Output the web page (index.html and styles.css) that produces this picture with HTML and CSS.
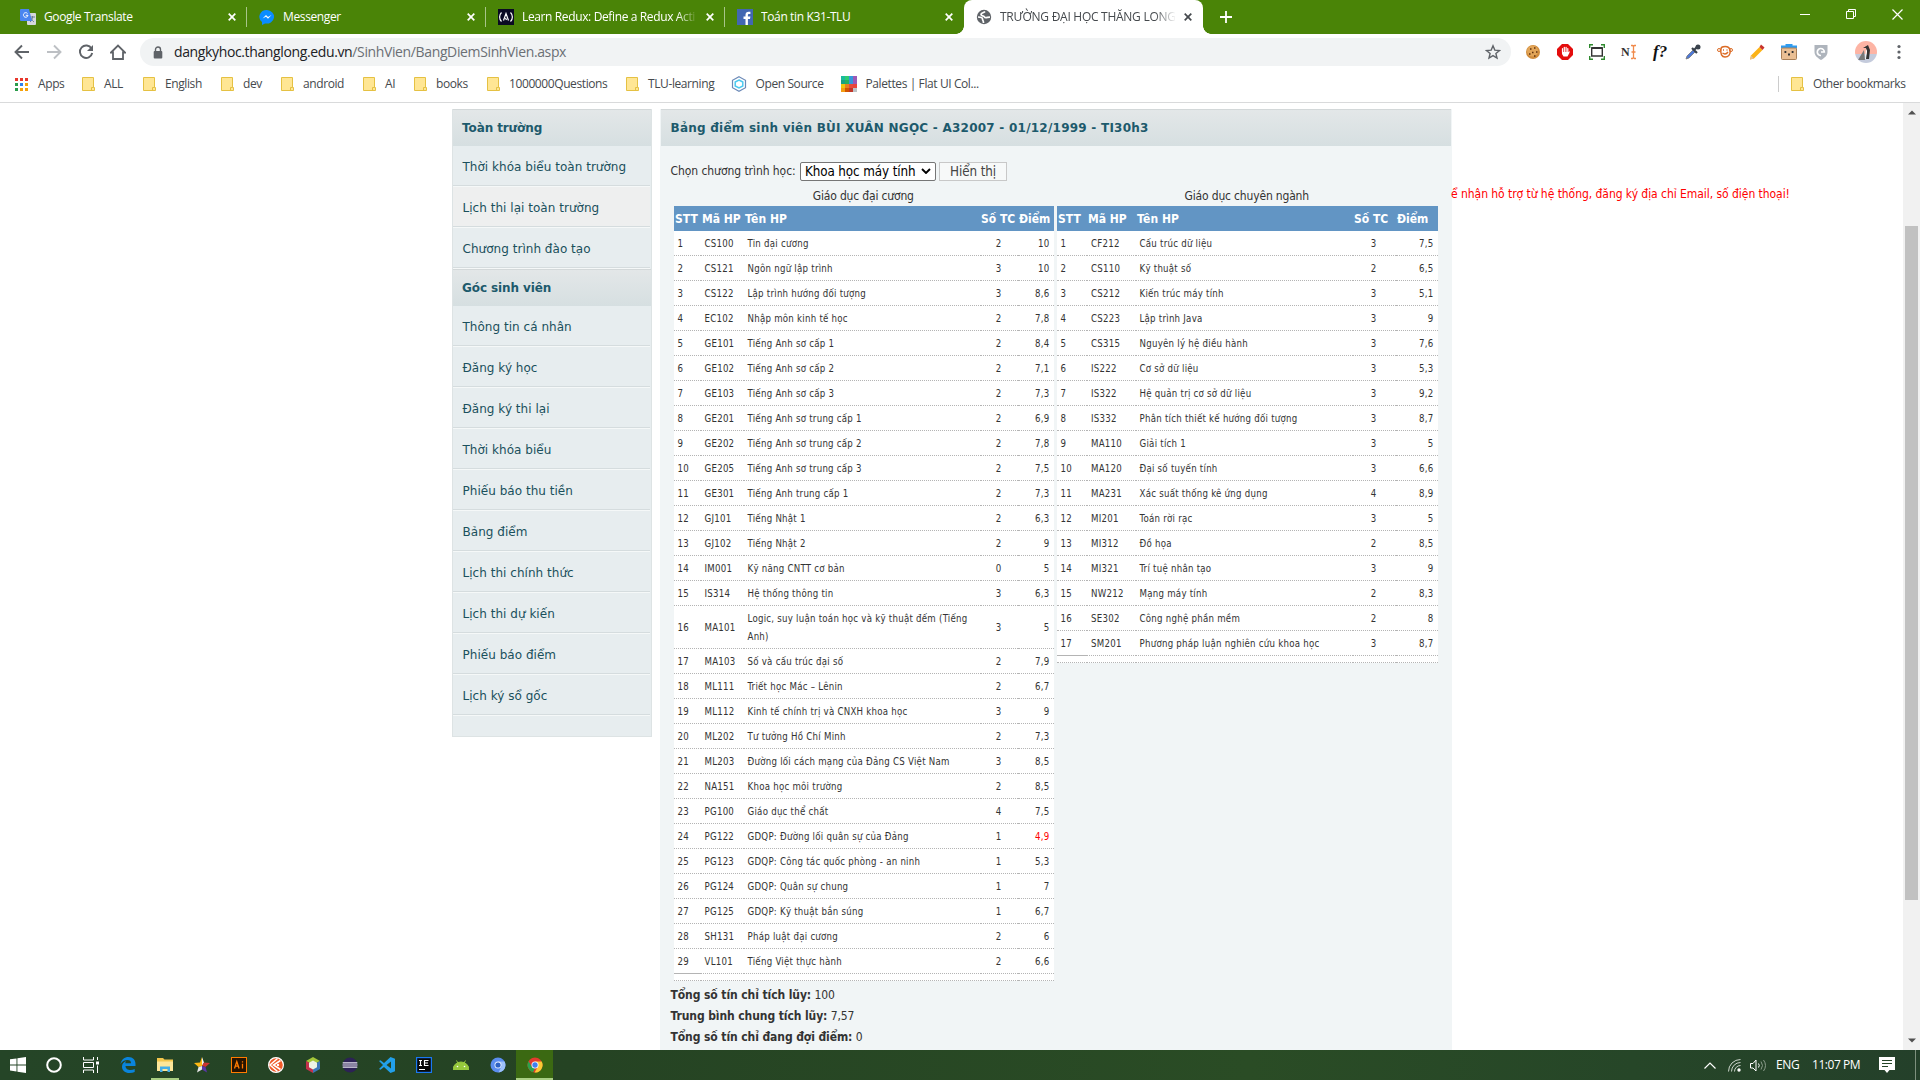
FILE: index.html
```html
<!DOCTYPE html>
<html lang="vi">
<head>
<meta charset="utf-8">
<title>TRƯỜNG ĐẠI HỌC THĂNG LONG</title>
<link rel="stylesheet" href="styles.css">
</head>
<body>
<svg class="defs" width="0" height="0">
  <symbol id="x" viewBox="0 0 8 8"><path d="M.7.7l6.6 6.6M7.3.7L.7 7.3" stroke="currentColor" stroke-width="1.7" fill="none"/></symbol>
  <symbol id="folder" viewBox="0 0 13 14"><path d="M.5.5h11v10h1v3H.5z" fill="#ffe694" stroke="#e5c143"/><path d="M9.5 13.5v-3h2" fill="none" stroke="#e5c143"/></symbol>
</svg>

<header class="tabs">
  <div class="tab"><svg class="fav" viewBox="0 0 16 16"><rect x="7" y="4" width="9" height="12" rx="1" fill="#d5d8dc"/><path d="M10 8h5M12.500 7v1c0 2-1 4-2.500 5m1-4c.5 2 2 3 3 4" stroke="#6b7f93" fill="none"/><path d="M1 0h8l3 12H1a1 1 0 0 1-1-1V1a1 1 0 0 1 1-1z" fill="#4a86f0"/><path d="M7.500 4.500A2.300 2.300 0 1 0 8 6.300H5.800" stroke="#fff" fill="none"/></svg><span class="tt">Google Translate</span><svg class="cl"><use href="#x"/></svg></div>
  <div class="tab"><svg class="fav" viewBox="0 0 16 16"><path d="M8 1a7.300 6.800 0 0 0-5 12v3l3-1.600A7.300 6.800 0 1 0 8 1z" fill="#0a8cff"/><path d="M3.500 9.500L7 6l2 2 3.500-2L9 9.700l-2-2z" fill="#fff"/></svg><span class="tt">Messenger</span><svg class="cl"><use href="#x"/></svg></div>
  <div class="tab"><svg class="fav" viewBox="0 0 16 16"><rect width="16" height="16" fill="#0a0a23"/><path d="M3.500 3.500c-2.500 2.500-2.500 6.500 0 9M12.500 3.500c2.500 2.500 2.500 6.500 0 9M5.500 11.500l2.500-7 2.500 7M7.500 9l1 2" stroke="#fff" stroke-width="1.200" fill="none"/></svg><span class="tt fade">Learn Redux: Define a Redux Acti</span><svg class="cl"><use href="#x"/></svg></div>
  <div class="tab"><svg class="fav" viewBox="0 0 16 16"><rect width="16" height="16" fill="#4267b2"/><path d="M8.500 16V10H6.500V7.500h2V6c0-2.200 1.200-3.300 3.200-3.300h1.700V5h-1.200c-1 0-1.300.5-1.300 1.300v1.200h2.500L13 10h-2.100v6z" fill="#fff"/></svg><span class="tt">Toán tin K31-TLU</span><svg class="cl"><use href="#x"/></svg></div>
  <div class="tab active"><svg class="fav" viewBox="0 0 16 16"><circle cx="8" cy="8" r="7.200" fill="#5f6368"/><path d="M9 2.500C8 4 5 3.800 5 5.500s3 1 3.500 2.500S12 8 14 8.200M2 8c3 0 4.500.5 4.500 2s1 1.500 1 4" stroke="#fff" stroke-width="1.700" fill="none"/></svg><span class="tt fade">TRƯỜNG ĐẠI HỌC THĂNG LONG</span><svg class="cl"><use href="#x"/></svg></div>
  <svg class="plus" viewBox="0 0 12 12"><path d="M6 0v12M0 6h12" stroke="#fff" stroke-width="1.800"/></svg>
  <div class="win">
    <svg width="10" height="10" viewBox="0 0 10 10"><path d="M0 5.500h10" stroke="#fff"/></svg>
    <svg width="10" height="10" viewBox="0 0 10 10"><path d="M.5 2.500h7v7h-7zM2.500 2.500v-2h7v7h-2" stroke="#fff" fill="none"/></svg>
    <svg width="11" height="11" viewBox="0 0 11 11"><path d="M.5.5l10 10M10.500.5l-10 10" stroke="#fff" stroke-width="1.200"/></svg>
  </div>
</header>

<nav class="bar">
  <div class="navs">
    <svg viewBox="0 0 16 16"><path d="M15 8H2M8 1.500L1.500 8 8 14.500" stroke="#5f6368" stroke-width="1.900" fill="none"/></svg>
    <svg viewBox="0 0 16 16"><path d="M1 8h13M8 1.500L14.500 8 8 14.500" stroke="#bdc0c4" stroke-width="1.900" fill="none"/></svg>
    <svg viewBox="0 0 16 16"><path d="M13.500 4.600A6.200 6.200 0 1 0 14.200 9" stroke="#5f6368" stroke-width="1.900" fill="none"/><path d="M15 1v6H9z" fill="#5f6368"/></svg>
    <svg viewBox="0 0 16 16"><path d="M1 8.500L8 1.500l7 7h-2V15H3V8.500z" stroke="#5f6368" stroke-width="1.800" fill="none"/></svg>
  </div>
  <div class="omni">
    <svg class="lock" viewBox="0 0 10 13"><path d="M2.500 6V3.500a2.500 2.500 0 0 1 5 0V6" stroke="#5f6368" stroke-width="1.400" fill="none"/><rect x=".7" y="5" width="8.600" height="7.500" rx="1" fill="#5f6368"/></svg>
    <span class="url">dangkyhoc.thanglong.edu.vn<i>/SinhVien/BangDiemSinhVien.aspx</i></span>
    <svg class="star" viewBox="0 0 16 16"><path d="M8 1.800l1.800 4.300 4.700.4-3.600 3 1.100 4.600L8 11.600l-4 2.500 1.100-4.600-3.600-3 4.700-.4z" stroke="#5f6368" stroke-width="1.400" fill="none"/></svg>
  </div>
  <div class="ext">
    <svg viewBox="0 0 16 16"><circle cx="8" cy="8" r="7" fill="#d08c3c"/><circle cx="7.500" cy="7" r="5.500" fill="#e2a558"/><path d="M5 5h1.500M9 4h1.500M7 8.500h1.500M11 8h1.500M4 10h1.500M9 12h1.500" stroke="#60300c" stroke-width="1.600"/></svg>
    <svg viewBox="0 0 16 16"><path d="M5 0h6l5 5v6l-5 5H5l-5-5V5z" fill="#e40d0d"/><path d="M5.500 8.500v-4M7.300 8V3.300M9.100 8V3.300M10.800 8.500v-4" stroke="#fff" stroke-width="1.200" stroke-linecap="round"/><path d="M5 8h6.500l1-1.300v2L10.500 12.500H6.500L5 10z" fill="#fff"/></svg>
    <svg viewBox="0 0 16 16"><path d="M.7 4V.7H4M12 .7h3.300V4M.7 12v3.300H4M12 15.300h3.300V12" stroke="#2f8a2f" stroke-width="1.400" fill="none"/><path d="M2.700 4h10.600v8H2.700z" stroke="#333" stroke-width="1.400" fill="none"/><path d="M2.500 4h11" stroke="#333" stroke-width="2"/></svg>
    <span class="n">N<svg viewBox="0 0 7 16"><path d="M1 1.500h1.500l1 1 1-1H6M3.500 2v12M1 14.500h1.500l1-1 1 1H6M1.500 8h4" stroke="#f08a4b" stroke-width="1.300" fill="none"/></svg></span>
    <span class="f">f?</span>
    <svg viewBox="0 0 16 16"><path d="M1 15l1-3 6-6 2 2-6 6z" fill="#4f79d8" stroke="#777" stroke-width=".8"/><path d="M7 4l5 5M9 6l4-4" stroke="#39424c" stroke-width="2.200"/><circle cx="13" cy="3" r="2.500" fill="#39424c"/></svg>
    <svg viewBox="0 0 16 16"><path d="M4 5c0-3 8-4 9 1s-2 7-5 7-5-3-4-8z" fill="none" stroke="#dc6b25" stroke-width="1.500"/><circle cx="2" cy="6" r="1.500" fill="none" stroke="#dc6b25"/><circle cx="14" cy="6" r="1.500" fill="none" stroke="#dc6b25"/><path d="M6 6h1M9.500 6h1M5.500 9c2 1.500 4 1 5.500-1" stroke="#dc6b25" stroke-width="1.500" fill="none"/></svg>
    <svg viewBox="0 0 16 16"><path d="M1 15.500l1-4L10.500 3l3 3L5 14.500z" fill="#fcb316"/><path d="M10.500 3l1.500-2.500 3.500 3L13.500 6z" fill="#c8332b"/><path d="M1 15.500l1-4 3 3z" fill="#e8c08c"/></svg>
    <svg viewBox="0 0 16 16"><rect x="4.500" y="0" width="7" height="3" fill="#2e9bf0"/><rect x="0" y="1.500" width="16" height="3" fill="#2e9bf0"/><rect x=".5" y="4" width="15" height="11.500" rx="1" fill="#eabf94" stroke="#a98058"/><path d="M3.500 8h1.800M10.700 8h1.800M7 10.500h2" stroke="#333" stroke-width="1.800"/></svg>
    <svg viewBox="0 0 16 16"><path d="M1.500 1h13v7c0 4-4 6.500-6.500 8-2.500-1.500-6.500-4-6.500-8z" fill="#aeb4bc"/><path d="M8 11.500A3.500 3.500 0 1 1 11.300 8H8" stroke="#fff" stroke-width="1.700" fill="none"/></svg>
  </div>
  <svg class="ava" viewBox="0 0 22 22"><clipPath id="ac"><circle cx="11" cy="11" r="11"/></clipPath><g clip-path="url(#ac)"><path d="M0 0h22v13H0z" fill="#fdb4a4"/><path d="M0 13h22v9H0z" fill="#c4cbdc"/><path d="M3 19l6-10 1 10z" fill="#777"/><path d="M8 7l5-3 2 5-1 9h-4l2-7-1-4z" fill="#333"/><path d="M11 8l1 2-1 8h-1z" fill="#fff"/></g></svg>
  <svg class="dots" viewBox="0 0 4 16"><g fill="#5f6368"><circle cx="2" cy="2.500" r="1.600"/><circle cx="2" cy="8" r="1.600"/><circle cx="2" cy="13.500" r="1.600"/></g></svg>
</nav>

<nav class="marks">
  <a><svg class="apps" viewBox="0 0 13 13"><path d="M0 1.500h3M5 1.500h3M10 1.500h3" stroke="#e8372c" stroke-width="3"/><path d="M0 6.500h3" stroke="#2a9c4b" stroke-width="3"/><path d="M5 6.500h3" stroke="#2f80ed" stroke-width="3"/><path d="M10 6.500h3" stroke="#f5a10a" stroke-width="3"/><path d="M0 11.500h3" stroke="#2a9c4b" stroke-width="3"/><path d="M5 11.500h8" stroke="#f5a10a" stroke-width="3" stroke-dasharray="3 2"/></svg>Apps</a>
  <a><svg><use href="#folder"/></svg>ALL</a>
  <a><svg><use href="#folder"/></svg>English</a>
  <a><svg><use href="#folder"/></svg>dev</a>
  <a><svg><use href="#folder"/></svg>android</a>
  <a><svg><use href="#folder"/></svg>AI</a>
  <a><svg><use href="#folder"/></svg>books</a>
  <a><svg><use href="#folder"/></svg>1000000Questions</a>
  <a><svg><use href="#folder"/></svg>TLU-learning</a>
  <a><svg class="wide" viewBox="0 0 16 16"><path d="M8 .7l6.500 3.600v7.400L8 15.300l-6.500-3.600V4.300z" fill="none" stroke="#6c8ab8" stroke-width="1.200"/><path d="M8 4l3.800 2v4L8 12l-3.800-2V6z" fill="none" stroke="#4cc9f0" stroke-width="1.500"/></svg>Open Source</a>
  <a><svg class="wide" viewBox="0 0 16 16" shape-rendering="crispEdges"><path fill="#1abc9c" d="M0 0h4v4H0z"/><path fill="#16a085" d="M0 4h4v4H0z"/><path fill="#2ecc71" d="M4 0h4v4H4z"/><path fill="#27ae60" d="M4 4h4v4H4z"/><path fill="#3498db" d="M8 0h4v8H8z"/><path fill="#9b59b6" d="M12 0h4v8h-4z"/><path fill="#f1c40f" d="M0 8h4v4H0z"/><path fill="#f39c12" d="M0 12h4v4H0z"/><path fill="#e67e22" d="M4 8h4v4H4z"/><path fill="#d35400" d="M4 12h4v4H4z"/><path fill="#e74c3c" d="M8 8h4v4H8z"/><path fill="#c0392b" d="M8 12h4v4H8z"/><path fill="#e8453c" d="M12 8h4v4h-4z"/><path fill="#bdc3c7" d="M12 12h4v4h-4z"/></svg>Palettes | Flat UI Col...</a>
  <a class="other"><svg><use href="#folder"/></svg>Other bookmarks</a>
</nav>

<div class="view">
  <aside class="side">
    <h2>Toàn trường</h2>
    <a>Thời khóa biểu toàn trường</a>
    <a class="hover">Lịch thi lại toàn trường</a>
    <a>Chương trình đào tạo</a>
    <h2>Góc sinh viên</h2>
    <a>Thông tin cá nhân</a>
    <a>Đăng ký học</a>
    <a>Đăng ký thi lại</a>
    <a>Thời khóa biểu</a>
    <a>Phiếu báo thu tiền</a>
    <a>Bảng điểm</a>
    <a>Lịch thi chính thức</a>
    <a>Lịch thi dự kiến</a>
    <a>Phiếu báo điểm</a>
    <a>Lịch ký sổ gốc</a>
  </aside>
  <main class="main">
    <h1>Bảng điểm sinh viên BÙI XUÂN NGỌC - A32007 - 01/12/1999 - TI30h3</h1>
    <div class="pick">
      <label>Chọn chương trình học:</label>
      <div class="select">Khoa học máy tính<svg viewBox="0 0 10 6"><path d="M1 1l4 4 4-4" stroke="#000" stroke-width="1.900" fill="none"/></svg></div>
      <button class="btn">Hiển thị</button>
    </div>
    <div class="grades">
      <section>
        <p class="cap">Giáo dục đại cương</p>
        <table class="t1">
          <colgroup><col class="c1"><col class="c2"><col class="c3"><col class="c4"><col class="c5"></colgroup>
          <tr><th>STT<th>Mã HP<th>Tên HP<th>Số TC<th>Điểm</tr>
          <tr><td>1<td>CS100<td>Tin đại cương<td>2<td>10</tr>
          <tr><td>2<td>CS121<td>Ngôn ngữ lập trình<td>3<td>10</tr>
          <tr><td>3<td>CS122<td>Lập trình hướng đối tượng<td>3<td>8,6</tr>
          <tr><td>4<td>EC102<td>Nhập môn kinh tế học<td>2<td>7,8</tr>
          <tr><td>5<td>GE101<td>Tiếng Anh sơ cấp 1<td>2<td>8,4</tr>
          <tr><td>6<td>GE102<td>Tiếng Anh sơ cấp 2<td>2<td>7,1</tr>
          <tr><td>7<td>GE103<td>Tiếng Anh sơ cấp 3<td>2<td>7,3</tr>
          <tr><td>8<td>GE201<td>Tiếng Anh sơ trung cấp 1<td>2<td>6,9</tr>
          <tr><td>9<td>GE202<td>Tiếng Anh sơ trung cấp 2<td>2<td>7,8</tr>
          <tr><td>10<td>GE205<td>Tiếng Anh sơ trung cấp 3<td>2<td>7,5</tr>
          <tr><td>11<td>GE301<td>Tiếng Anh trung cấp 1<td>2<td>7,3</tr>
          <tr><td>12<td>GJ101<td>Tiếng Nhật 1<td>2<td>6,3</tr>
          <tr><td>13<td>GJ102<td>Tiếng Nhật 2<td>2<td>9</tr>
          <tr><td>14<td>IM001<td>Kỹ năng CNTT cơ bản<td>0<td>5</tr>
          <tr><td>15<td>IS314<td>Hệ thống thông tin<td>3<td>6,3</tr>
          <tr class="tall"><td>16<td>MA101<td>Logic, suy luận toán học và kỹ thuật đếm (Tiếng<br>Anh)<td>3<td>5</tr>
          <tr><td>17<td>MA103<td>Số và cấu trúc đại số<td>2<td>7,9</tr>
          <tr><td>18<td>ML111<td>Triết học Mác – Lênin<td>2<td>6,7</tr>
          <tr><td>19<td>ML112<td>Kinh tế chính trị và CNXH khoa học<td>3<td>9</tr>
          <tr><td>20<td>ML202<td>Tư tưởng Hồ Chí Minh<td>2<td>7,3</tr>
          <tr><td>21<td>ML203<td>Đường lối cách mạng của Đảng CS Việt Nam<td>3<td>8,5</tr>
          <tr><td>22<td>NA151<td>Khoa học môi trường<td>2<td>8,5</tr>
          <tr><td>23<td>PG100<td>Giáo dục thể chất<td>4<td>7,5</tr>
          <tr><td>24<td>PG122<td>GDQP: Đường lối quân sự của Đảng<td>1<td class="low">4,9</tr>
          <tr><td>25<td>PG123<td>GDQP: Công tác quốc phòng - an ninh<td>1<td>5,3</tr>
          <tr><td>26<td>PG124<td>GDQP: Quân sự chung<td>1<td>7</tr>
          <tr><td>27<td>PG125<td>GDQP: Kỹ thuật bắn súng<td>1<td>6,7</tr>
          <tr><td>28<td>SH131<td>Pháp luật đại cương<td>2<td>6</tr>
          <tr><td class="solid">29<td>VL101<td>Tiếng Việt thực hành<td>2<td>6,6</tr>
          <tr class="end"><td><td><td><td><td></tr>
        </table>
      </section>
      <section>
        <p class="cap">Giáo dục chuyên ngành</p>
        <table class="t2">
          <colgroup><col class="c1"><col class="c2"><col class="c3"><col class="c4"><col class="c5"></colgroup>
          <tr><th>STT<th>Mã HP<th>Tên HP<th>Số TC<th>Điểm</tr>
          <tr><td>1<td>CF212<td>Cấu trúc dữ liệu<td>3<td>7,5</tr>
          <tr><td>2<td>CS110<td>Kỹ thuật số<td>2<td>6,5</tr>
          <tr><td>3<td>CS212<td>Kiến trúc máy tính<td>3<td>5,1</tr>
          <tr><td>4<td>CS223<td>Lập trình Java<td>3<td>9</tr>
          <tr><td>5<td>CS315<td>Nguyên lý hệ điều hành<td>3<td>7,6</tr>
          <tr><td>6<td>IS222<td>Cơ sở dữ liệu<td>3<td>5,3</tr>
          <tr><td>7<td>IS322<td>Hệ quản trị cơ sở dữ liệu<td>3<td>9,2</tr>
          <tr><td>8<td>IS332<td>Phân tích thiết kế hướng đối tượng<td>3<td>8,7</tr>
          <tr><td>9<td>MA110<td>Giải tích 1<td>3<td>5</tr>
          <tr><td>10<td>MA120<td>Đại số tuyến tính<td>3<td>6,6</tr>
          <tr><td>11<td>MA231<td>Xác suất thống kê ứng dụng<td>4<td>8,9</tr>
          <tr><td>12<td>MI201<td>Toán rời rạc<td>3<td>5</tr>
          <tr><td>13<td>MI312<td>Đồ họa<td>2<td>8,5</tr>
          <tr><td>14<td>MI321<td>Trí tuệ nhân tạo<td>3<td>9</tr>
          <tr><td>15<td>NW212<td>Mạng máy tính<td>2<td>8,3</tr>
          <tr><td>16<td>SE302<td>Công nghệ phần mềm<td>2<td>8</tr>
          <tr><td class="solid">17<td>SM201<td>Phương pháp luận nghiên cứu khoa học<td>3<td>8,7</tr>
          <tr class="end"><td><td><td><td><td></tr>
        </table>
      </section>
    </div>
    <div class="sum">
      <p><b>Tổng số tín chỉ tích lũy:</b> 100</p>
      <p><b>Trung bình chung tích lũy:</b> 7,57</p>
      <p><b>Tổng số tín chỉ đang đợi điểm:</b> 0</p>
    </div>
  </main>
  <p class="notice">ể nhận hỗ trợ từ hệ thống, đăng ký địa chỉ Email, số điện thoại!</p>
  <div class="scroll">
    <svg viewBox="0 0 8 5"><path d="M0 4.500L4 .5l4 4z" fill="#505050"/></svg>
    <div class="thumb"></div>
    <svg viewBox="0 0 8 5"><path d="M0 .5h8l-4 4z" fill="#505050"/></svg>
  </div>
</div>

<footer class="task">
  <div class="icons">
    <div><svg viewBox="0 0 16 16"><path d="M0 2.300L6.500 1.400v6.100H0zM7.400 1.200L16 0v7.500H7.400zM0 8.400h6.500v6.100L0 13.600zM7.400 8.400H16V16l-8.600-1.200z" fill="#fff"/></svg></div>
    <div><svg viewBox="0 0 16 16"><circle cx="8" cy="8" r="6.800" stroke="#fff" stroke-width="2" fill="none"/></svg></div>
    <div><svg viewBox="0 0 16 16"><path d="M.5 0v3h10V0M.5 16v-3h10v3M.5 5.500h10v5H.5zM14.500 0v3M14.500 8.500V16" stroke="#fff" fill="none"/><path d="M13 4.500h3v3h-3z" fill="#fff"/></svg></div>
    <div><svg viewBox="0 0 16 16"><path d="M.5 7C1.500 2.500 4.500 0 8.500 0c4.500 0 7 3 7 7v2H5.500c.2 3 2.500 4 5 4 1.500 0 3-.4 4.200-1.100v3.200C13.200 15.700 11.500 16 9.500 16 5 16 2 13.200 2 9.700 2 7 3.700 5 6 4c-.5.8-.7 1.500-.7 2.300H11C11 4 9.800 3 7.500 3 4.500 3 2 4.500.5 7z" fill="#0a84dc"/></svg></div>
    <div class="open"><svg viewBox="0 0 16 16"><path d="M0 1h6l1.500 1.500H16V14H0z" fill="#f3c64d"/><path d="M0 4.500h16V14H0z" fill="#fde69a"/><path d="M3 9.500h10V15h-2.500v-3h-5v3H3z" fill="#45aee8"/></svg></div>
    <div><svg viewBox="0 0 16 16"><path d="M8 0l2 5.500L8 9z" fill="#f4f4f4"/><path d="M8 0L6 5.500 0 6l4.500 4L8 9z" fill="#fdb813"/><path d="M10 5.500L16 6l-4.500 4L8 9z" fill="#c33"/><path d="M4.500 10L3 15.500l5-3V9z" fill="#e8e8e8"/><path d="M11.500 10l1.500 5.500-5-3V9z" fill="#5b35a8"/></svg></div>
    <div><svg viewBox="0 0 16 16"><rect x=".5" y=".5" width="15" height="15" fill="#261300" stroke="#ff7c00"/><path d="M3.500 11.500l2.300-7 2.300 7M4.300 9.200h3M11.500 6.800v4.700M11.500 4.300v1.200" stroke="#ff7c00" stroke-width="1.300" fill="none"/></svg></div>
    <div><svg viewBox="0 0 16 16"><circle cx="8" cy="8" r="7.400" fill="#f05a28" stroke="#fff" stroke-width="1.200"/><path d="M12.500 3.500L5.500 8l7 4.500M9.500 1.500L2 8l7.500 6.500" fill="none" stroke="#fff" stroke-width="1.500"/><circle cx="10" cy="8" r="1.200" fill="#fff"/></svg></div>
    <div><svg viewBox="0 0 16 16"><path d="M8 0l7 4-7 4-7-4z" fill="#a5c73a"/><path d="M1 4l7 4v8l-7-4z" fill="#c4314b"/><path d="M15 4L8 8v8l7-4z" fill="#3d77b8"/><path d="M8 3.500l4 2.200v4.600L8 12.500l-4-2.200V5.700z" fill="#eef3e6"/></svg></div>
    <div><svg viewBox="0 0 16 16"><circle cx="8" cy="8" r="7.500" fill="#2c2255"/><path d="M.7 5.800h14.600M.5 8h15M.7 10.200h14.600" stroke="#e8e6f0" stroke-width="1.200"/></svg></div>
    <div><svg viewBox="0 0 16 16"><path d="M11.500 0L16 1.800v12.400L11.500 16 5 9.900l-3.500 2.800L0 12l4-4-4-4 1.500-.7L5 6.100zM12 4.500L7.500 8l4.500 3.500z" fill="#22a0ea" fill-rule="evenodd"/></svg></div>
    <div><svg viewBox="0 0 16 16"><rect x=".6" y=".6" width="14.800" height="14.800" fill="#080808" stroke="#1a78f2" stroke-width="1.200"/><path d="M3 3.500h3M4.500 3.500v5M3 8.500h3M12.500 3.500H8.500v5h4M8.500 6h3.500M3 12.500h6" stroke="#fff" stroke-width="1.200" fill="none"/></svg></div>
    <div><svg viewBox="0 0 16 16"><path d="M0 12.500a8 7.500 0 0 1 16 0zM3.500 3.500L5.500 7M12.500 3.500L10.500 7" fill="#97c93d" stroke="#97c93d"/><circle cx="4.500" cy="9.500" r=".8" fill="#fff"/><circle cx="11.500" cy="9.500" r=".8" fill="#fff"/></svg></div>
    <div><svg viewBox="0 0 16 16"><circle cx="8" cy="8" r="7.500" fill="#5b8def"/><path d="M8 4.500h6.600A7.500 7.500 0 0 1 8.500 15.500L11.500 9.500z" fill="#9cc0fa"/><circle cx="8" cy="8" r="3.500" fill="#e8f0fe"/><circle cx="8" cy="8" r="2.600" fill="#2d62c4"/></svg></div>
    <div class="cur"><svg viewBox="0 0 16 16"><circle cx="8" cy="8" r="7.500" fill="#e33b2e"/><path d="M1.500 4.300L5 10l3 1.500-2 3.700A7.500 7.500 0 0 1 1.500 4.300z" fill="#2ba24c"/><path d="M8 4.500h6.700A7.500 7.500 0 0 1 7.500 15.500L11 9.500z" fill="#fcc934"/><circle cx="8" cy="8" r="3.500" fill="#fff"/><circle cx="8" cy="8" r="2.700" fill="#3f80ee"/></svg></div>
  </div>
  <div class="tray">
    <svg class="up" viewBox="0 0 12 7"><path d="M.5 6.500L6 1l5.500 5.500" stroke="#fff" stroke-width="1.200" fill="none"/></svg>
    <svg class="wifi" viewBox="0 0 13 13"><g fill="none" stroke="#cdd6cd"><path d="M.5 12.500a12 12 0 0 1 12-12M3.500 12.500a9 9 0 0 1 9-9M6.500 12.500a6 6 0 0 1 6-6"/></g><circle cx="11" cy="11" r="1.700" fill="#fff"/></svg>
    <svg class="vol" viewBox="0 0 16 13"><path d="M.5 4.500H3l3-3.500v11L3 9H.5z" stroke="#fff" fill="none"/><path d="M8.500 4.500q1.500 2 0 4" stroke="#fff" fill="none"/><path d="M11 2.500q3 4 0 8M13.500 1q4 5.500 0 11" stroke="#8b9c8b" fill="none"/></svg>
    <span class="eng">ENG</span>
    <span class="time">11:07 PM</span>
    <svg class="note" viewBox="0 0 16 16"><path d="M0 0h16v13h-5.500L8 16l-2.500-3H0z" fill="#fff"/><path d="M3 3.500h10M3 6.500h10M3 9.500h6" stroke="#264628"/></svg>
    <span class="peek"></span>
  </div>
</footer>
</body>
</html>
```
FILE: styles.css
```css
* { box-sizing: border-box; }
html, body { margin: 0; }
body {
  width: 1920px; height: 1080px; overflow: hidden;
  display: flex; flex-direction: column;
  background: #fff; color: #333;
  font: 12px/18px "DejaVu Sans Condensed", "DejaVu Sans", sans-serif;
}
.defs { display: none; }
svg { display: block; flex: none; }
h1, h2, p { margin: 0; }

/* tab strip */
.tabs, .bar, .marks, .task { font-family: "Open Sans", "Noto Sans", sans-serif; }
.tabs { flex: none; height: 34px; background: #4a8407; display: flex; align-items: center; padding-left: 8px; color: #fff; }
.tab { width: 239px; height: 34px; display: flex; align-items: center; padding: 0 11px 0 12px; position: relative; }
.tab::after { content: ""; position: absolute; right: 0; top: 7px; height: 20px; width: 1px; background: #a8c58a; }
.tab:nth-child(n+4)::after { display: none; }
.fav { width: 16px; height: 16px; margin-right: 8px; }
.tt { flex: 1; font-size: 12px; letter-spacing: -.37px; white-space: nowrap; overflow: hidden; }
.fade { -webkit-mask-image: linear-gradient(90deg, #000 88%, transparent); mask-image: linear-gradient(90deg, #000 88%, transparent); }
.cl { width: 8px; height: 8px; margin-left: 8px; }
.tab.active { background: #fff; color: #45494d; border-radius: 8px 8px 0 0; }
.tab.active .tt { letter-spacing: -.27px; }
.tab.active::before { content: ""; position: absolute; bottom: 0; left: -8px; right: -8px; height: 8px; display: block;
  background: radial-gradient(circle at 0 0, transparent 7.5px, #fff 8px) left / 8px 8px no-repeat, radial-gradient(circle at 100% 0, transparent 7.5px, #fff 8px) right / 8px 8px no-repeat; }
.plus { width: 12px; height: 12px; margin-left: 17px; }
.win { margin-left: auto; display: flex; gap: 36px; padding: 0 17px 6px 0; align-items: center; }

/* address bar */
.bar { flex: none; height: 36px; display: flex; align-items: center; }
.navs { display: flex; gap: 16px; padding-left: 14px; width: 140px; }
.navs svg { width: 16px; height: 16px; }
.omni { width: 1371px; height: 28px; border-radius: 14px; background: #f1f3f4; display: flex; align-items: center; padding: 0 10px 0 13px; }
.lock { width: 10px; height: 13px; margin-right: 11px; }
.url { flex: 1; font-size: 14px; letter-spacing: -.37px; color: #202124; }
.url i { font-style: normal; color: #6b6f74; }
.star { width: 16px; height: 16px; }
.ext { display: flex; gap: 16px; padding-left: 14px; width: 332px; align-items: center; }
.ext > * { width: 16px; height: 16px; }
.n { font: bold 12px/16px "Liberation Serif", serif; color: #333; display: flex; }
.n svg { width: 7px; height: 16px; }
.f { font: italic bold 17px/15px "Liberation Serif", serif; color: #111; }
.ava { width: 22px; height: 22px; margin-left: 12px; }
.dots { width: 4px; height: 16px; margin-left: 20px; }

/* bookmarks */
.marks { flex: none; height: 33px; border-bottom: 1px solid #d9dadb; display: grid; align-items: center; padding: 0 0 4px 15px;
  grid-template-columns: 67px 61px 78px 60px 82px 51px 73px 139px 105px 110px 937px auto; color: #45494d; letter-spacing: -.4px; }
.marks a { display: flex; align-items: center; white-space: nowrap; }
.marks svg { width: 13px; height: 14px; margin-right: 9px; }
.marks svg.apps { height: 13px; margin-right: 10px; }
.marks svg.wide { width: 16px; height: 16px; margin-right: 8.500px; }
.marks .other { border-left: 1px solid #ccc; padding-left: 12px; height: 16px; }

/* page */
.view { flex: none; height: 947px; display: flex; align-items: flex-start; padding: 6px 0 0 452px; overflow: hidden; }
.side { width: 200px; height: 628px; background: #e7edef; border: solid #dde3e4; border-width: 0 1px 1px; }
.side h2, .main h1 {
  height: 37px; padding: 0 9px; border-top: 1px solid #d3d8d9;
  background: linear-gradient(#e3e7e8, #d6dfe1);
  color: #1d5a6c; font: bold 12px/36px "DejaVu Sans", sans-serif; letter-spacing: -.1px;
}
.side a { display: block; height: 41px; margin-right: 1px; padding-left: 9.500px; border-bottom: 1px solid #f5f8f8; box-shadow: inset 0 -1px #d5dcde; color: #1a505c; font: 12px/42px "DejaVu Sans", sans-serif; letter-spacing: .03px; }
.side a.hover { background: #eeefef; }
.main { width: 792px; height: 941px; margin-left: 8px; background: #f1f5f6; }
.main h1 { margin: 0 1px; padding-left: 9.500px; letter-spacing: .24px; }
.pick { display: flex; align-items: center; height: 20px; margin-top: 15px; padding-left: 10.500px; }
.pick label { width: 129.500px; letter-spacing: -.06px; }
.select { width: 136px; height: 19px; border: 1px solid #767676; border-radius: 2px; background: #fff; color: #000; font-size: 13.300px; line-height: 17px; letter-spacing: -.1px; padding: 0 4px; display: flex; align-items: center; justify-content: space-between; white-space: nowrap; }
.select svg { width: 10px; height: 6px; }
.btn { width: 68px; height: 19px; margin-left: 3px; padding: 0; border: 1px solid #c8c8c8; background: #f7f9f9; color: #444; font: 13.300px/17px "DejaVu Sans Condensed", sans-serif; letter-spacing: -.1px; }
.grades { display: flex; gap: 3px; align-items: flex-start; padding: 6px 0 0 14px; }
.cap { height: 19px; padding-right: 1.500px; line-height: 18px; text-align: center; letter-spacing: -.17px; }
table { table-layout: fixed; border-collapse: separate; border-spacing: 0; background: #fff; font-size: 9.600px; }
.t1 { width: 380px; } .t2 { width: 381px; }
.t1 .c1 { width: 27px; } .t1 .c2 { width: 43px; } .t1 .c3 { width: 237px; } .t1 .c4 { width: 37px; } .t1 .c5 { width: 36px; }
.t2 .c1 { width: 30px; } .t2 .c2 { width: 49px; } .t2 .c3 { width: 217px; } .t2 .c4 { width: 43px; } .t2 .c5 { width: 42px; }
th { height: 25px; padding: 0 0 0 1px; background: #6295c4; color: #fff; font-size: 12px; text-align: left; white-space: nowrap; }
th:nth-child(2) { padding-left: 1px; }
.t1 th:nth-child(4) { padding-left: 0; }
td { height: 25px; padding: 1.500px 0 0 3.500px; border-bottom: 1px dotted #b4b4b4; line-height: 18px; white-space: nowrap; letter-spacing: .25px; }
td:nth-child(4) { text-align: center; padding: 1.500px 2px 0 0; }
td:nth-child(5) { text-align: right; padding: 1.500px 4.500px 0 0; }
.t2 td:nth-child(2) { padding-left: 4px; }
.t2 th:nth-child(n+4) { padding-left: 1px; }
.tall td { height: 43px; }
.low { color: #f00; }
td.solid { border-bottom-style: solid; }
.end td, .end td:nth-child(n) { height: 7px; padding: 0; line-height: 0; }
.sum { padding: 4px 0 0 10.500px; line-height: 21px; letter-spacing: -.09px; }
.notice { margin: 76px 0 0 -1px; color: #f00; white-space: nowrap; letter-spacing: -.05px; }
.scroll { width: 17px; height: 947px; margin: -6px 0 0 auto; background: #f1f1f1; display: flex; flex-direction: column; align-items: center; padding: 7px 0; }
.scroll svg { width: 8px; height: 5px; }
.thumb { width: 13px; height: 674px; background: #c1c1c1; margin: 111px 0 auto; }

/* taskbar */
.task { flex: none; height: 30px; background: linear-gradient(90deg, #254527, #254323 30%, #2a4c25 65%, #264628 85%, #24402a); display: flex; justify-content: space-between; color: #fff; }
.icons { display: flex; }
.icons div { width: 37px; height: 30px; display: flex; align-items: center; justify-content: center; }
.icons div:first-child { width: 36px; }
.icons div:nth-child(2) { width: 36px; }
.icons svg { width: 16px; height: 16px; }
.icons .open { background: linear-gradient(#a9cf83, #a9cf83) center bottom / 28px 2px no-repeat; }
.icons .cur { background: #3b6912; box-shadow: inset 0 -2px #a9cf83; }
.tray { display: flex; align-items: center; width: 216px; }
.up { width: 12px; height: 7px; }
.wifi { width: 13px; height: 13px; margin-left: 12px; }
.vol { width: 16px; height: 13px; margin-left: 9px; }
.eng { width: 36px; margin-left: 10px; letter-spacing: -.4px; }
.time { width: 67px; letter-spacing: -.45px; white-space: nowrap; }
.note { width: 16px; height: 16px; }
.peek { width: 1px; height: 30px; margin-left: 20px; background: #7d907d; }
```
